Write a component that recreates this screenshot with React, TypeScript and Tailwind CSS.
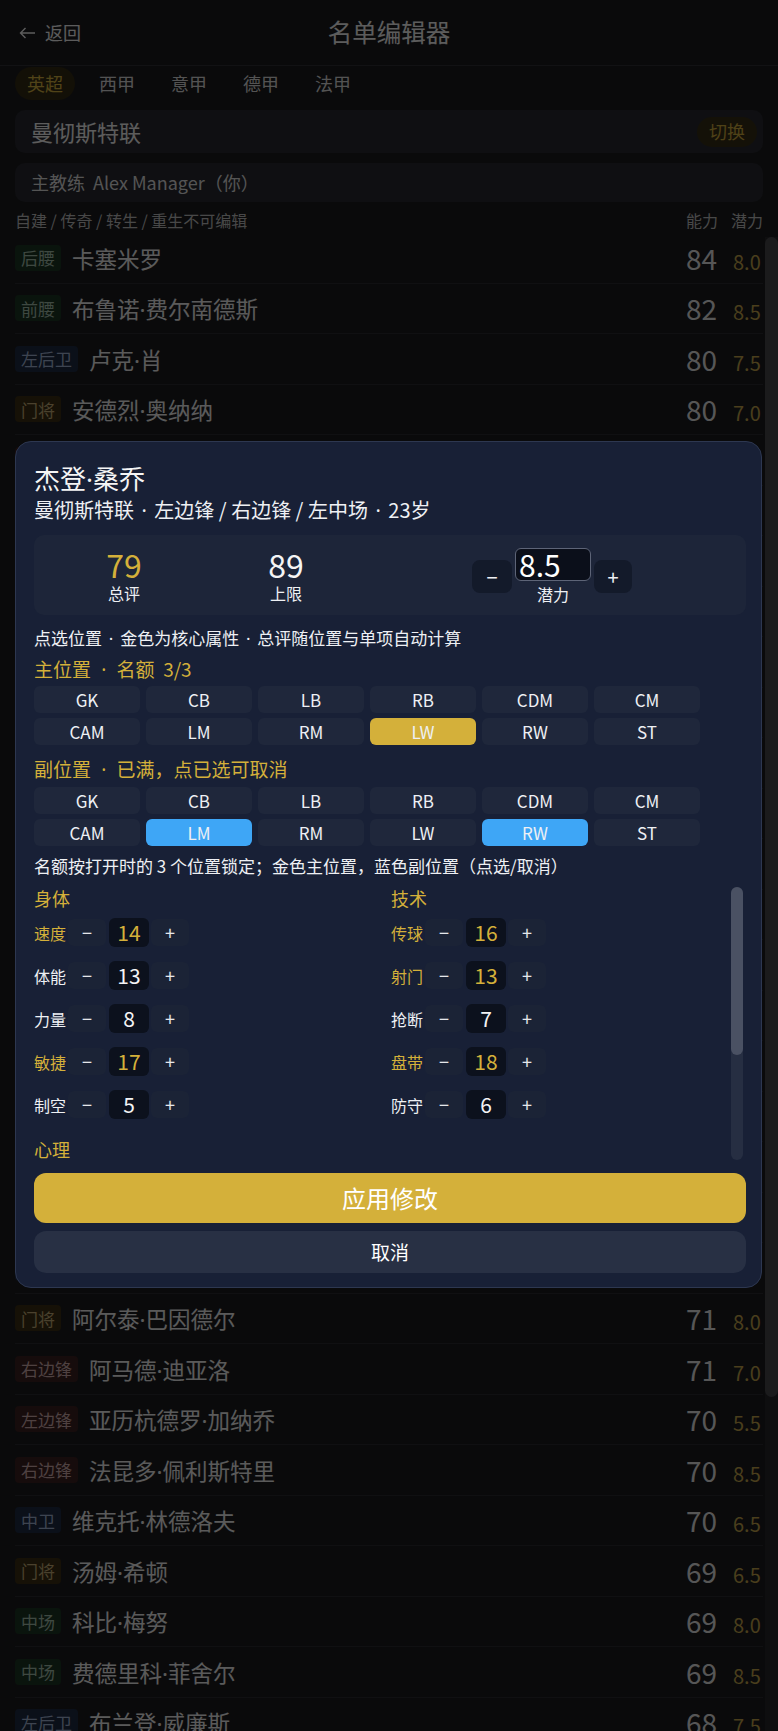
import React from 'react';

type Player = { pos: string; name: string; ovr: number; pot: string };

const players: Player[] = [
  { pos: '后腰', name: '卡塞米罗', ovr: 84, pot: '8.0' },
  { pos: '前腰', name: '布鲁诺·费尔南德斯', ovr: 82, pot: '8.5' },
  { pos: '左后卫', name: '卢克·肖', ovr: 80, pot: '7.5' },
  { pos: '门将', name: '安德烈·奥纳纳', ovr: 80, pot: '7.0' },
  { pos: '左边锋', name: '马库斯·拉什福德', ovr: 79, pot: '7.5' },
  { pos: '中卫', name: '利桑德罗·马丁内斯', ovr: 79, pot: '7.5' },
  { pos: '左边锋', name: '杰登·桑乔', ovr: 79, pot: '8.5' },
  { pos: '右后卫', name: '迪奥戈·达洛特', ovr: 78, pot: '8.0' },
  { pos: '中锋', name: '拉斯穆斯·霍伊伦', ovr: 77, pot: '8.5' },
  { pos: '中卫', name: '马塔伊斯·德里赫特', ovr: 77, pot: '8.0' },
  { pos: '中场', name: '梅森·芒特', ovr: 76, pot: '7.5' },
  { pos: '右后卫', name: '努塞尔·马兹拉维', ovr: 76, pot: '7.0' },
  { pos: '后腰', name: '曼努埃尔·乌加特', ovr: 76, pot: '7.5' },
  { pos: '中锋', name: '约书亚·齐尔克泽', ovr: 75, pot: '8.0' },
  { pos: '中场', name: '克里斯蒂安·埃里克森', ovr: 75, pot: '6.0' },
  { pos: '中卫', name: '哈里·马奎尔', ovr: 75, pot: '6.5' },
  { pos: '中卫', name: '乔尼·埃文斯', ovr: 73, pot: '5.5' },
  { pos: '左后卫', name: '泰瑞尔·马拉西亚', ovr: 73, pot: '7.0' },
  { pos: '右边锋', name: '安东尼', ovr: 72, pot: '6.5' },
  { pos: '中场', name: '斯科特·麦克托米奈', ovr: 72, pot: '7.0' },
  { pos: '右后卫', name: '阿隆·万-比萨卡', ovr: 72, pot: '7.0' },
  { pos: '门将', name: '阿尔泰·巴因德尔', ovr: 71, pot: '8.0' },
  { pos: '右边锋', name: '阿马德·迪亚洛', ovr: 71, pot: '7.0' },
  { pos: '左边锋', name: '亚历杭德罗·加纳乔', ovr: 70, pot: '5.5' },
  { pos: '右边锋', name: '法昆多·佩利斯特里', ovr: 70, pot: '8.5' },
  { pos: '中卫', name: '维克托·林德洛夫', ovr: 70, pot: '6.5' },
  { pos: '门将', name: '汤姆·希顿', ovr: 69, pot: '6.5' },
  { pos: '中场', name: '科比·梅努', ovr: 69, pot: '8.0' },
  { pos: '中场', name: '费德里科·菲舍尔', ovr: 69, pot: '8.5' },
  { pos: '左后卫', name: '布兰登·威廉斯', ovr: 68, pot: '7.5' },
];

const badgeTone: Record<string, string> = {
  后腰: 'bg-[#1b3322] text-[#9cb5a2]',
  前腰: 'bg-[#1b3322] text-[#9cb5a2]',
  中场: 'bg-[#1b3322] text-[#9cb5a2]',
  左后卫: 'bg-[#1c2840] text-[#9aabc8]',
  右后卫: 'bg-[#1c2840] text-[#9aabc8]',
  中卫: 'bg-[#1c2840] text-[#9aabc8]',
  门将: 'bg-[#382c12] text-[#b9a270]',
  左边锋: 'bg-[#381e1e] text-[#c2a2a2]',
  右边锋: 'bg-[#381e1e] text-[#c2a2a2]',
  中锋: 'bg-[#381e1e] text-[#c2a2a2]',
};

const leagues = ['英超', '西甲', '意甲', '德甲', '法甲'];
const positions = ['GK', 'CB', 'LB', 'RB', 'CDM', 'CM', 'CAM', 'LM', 'RM', 'LW', 'RW', 'ST'];

type Attr = { label: string; value: number; core: boolean };

const physical: Attr[] = [
  { label: '速度', value: 14, core: true },
  { label: '体能', value: 13, core: false },
  { label: '力量', value: 8, core: false },
  { label: '敏捷', value: 17, core: true },
  { label: '制空', value: 5, core: false },
];

const technical: Attr[] = [
  { label: '传球', value: 16, core: true },
  { label: '射门', value: 13, core: true },
  { label: '抢断', value: 7, core: false },
  { label: '盘带', value: 18, core: true },
  { label: '防守', value: 6, core: false },
];

// the CJK font draws "·" full width; use the narrow Latin one, with optional side room
const Dotted = ({ text, pad = '' }: { text: string; pad?: string }) => (
  <>
    {text.split('·').map((part, i) => (
      <React.Fragment key={i}>
        {i > 0 && <span className={"font-['Noto_Sans',sans-serif] leading-none " + pad}>·</span>}
        {part}
      </React.Fragment>
    ))}
  </>
);

const PosGrid = ({ selected, tone }: { selected: string[]; tone: 'gold' | 'blue' }) => (
  <div className="grid grid-cols-[repeat(6,106px)] gap-x-[6px] gap-y-[5px]">
    {positions.map((p) => {
      const on = selected.includes(p);
      return (
        <div
          key={p}
          className={
            'flex h-[27px] items-center justify-center rounded-[6px] text-[17px] text-[#eef0f4] ' +
            (on ? (tone === 'gold' ? 'bg-[#d4b03a]' : 'bg-[#3ea6f6]') : 'bg-[#1f273b]')
          }
        >
          {p}
        </div>
      );
    })}
  </div>
);

const AttrRow = ({ attr }: { attr: Attr }) => (
  <div className="flex h-[29px] items-center">
    <span className={'w-[32px] text-[16px] ' + (attr.core ? 'text-[#d4b03a]' : 'text-[#eef0f4]')}>{attr.label}</span>
    <span className="ml-[2px] flex h-[27px] w-[38px] items-center justify-center rounded-[6px] bg-[#1b2336] text-[18px] text-[#e5e7eb]">−</span>
    <span
      className={
        'ml-[3px] flex h-[29px] w-[40px] items-center justify-center rounded-[6px] bg-[#0c111d] text-[21px] ' +
        (attr.core ? 'text-[#d4b03a]' : 'text-[#f4f4f5]')
      }
    >
      {attr.value}
    </span>
    <span className="ml-[2px] flex h-[27px] w-[38px] items-center justify-center rounded-[6px] bg-[#1b2336] text-[18px] text-[#e5e7eb]">+</span>
  </div>
);

const AttrSection = ({ title, items }: { title: string; items: Attr[] }) => (
  <div>
    <div className="h-[20px] text-[18px] leading-[20px] text-[#d4b03a]">{title}</div>
    {items.length > 0 && (
      <div className="mt-[10px] flex flex-col gap-[14px]">
        {items.map((a) => (
          <AttrRow key={a.label} attr={a} />
        ))}
      </div>
    )}
  </div>
);

export default function App() {
  return (
    <div className="relative h-[1731px] overflow-hidden bg-[#1a1a1d] font-['Noto_Sans_CJK_SC',sans-serif] text-[#e6e6e6]">
      {/* header */}
      <header className="grid h-[66px] grid-cols-[1fr_auto_1fr] items-center border-b border-[#2e2e33]">
        <div className="flex items-center gap-[9px] pl-[19px] text-[18px]">
          <svg width="17" height="12" viewBox="0 0 17 12" fill="none" stroke="currentColor" strokeWidth="1.4">
            <path d="M16 6H1.5M6.5 1L1.5 6l5 5" />
          </svg>
          <span>返回</span>
        </div>
        <div className="text-[24.5px]">名单编辑器</div>
        <div />
      </header>

      {/* league tabs */}
      <div className="mt-[1px] flex gap-3 px-[15px]">
        {leagues.map((l, i) => (
          <div
            key={l}
            className={
              'flex h-[33px] items-center rounded-full px-3 text-[18px] ' +
              (i === 0 ? 'bg-[#302812] text-[#c9a83c]' : 'text-[#d0d0d0]')
            }
          >
            {l}
          </div>
        ))}
      </div>

      <div className="mx-[15px] mt-[10px] flex h-[43px] items-center justify-between rounded-[10px] bg-[#26272d] pl-[16px] pr-[6px]">
        <span className="text-[22px]">曼彻斯特联</span>
        <span className="flex h-[30px] items-center rounded-full bg-[#342c16] px-3 text-[18px] text-[#c4a23a]">切换</span>
      </div>

      <div className="mx-[15px] mt-[10px] flex h-[39px] items-center rounded-[10px] bg-[#26272d] pl-[16px] text-[18px] text-[#d2d2d2]">
        主教练&nbsp;&nbsp;Alex Manager（你）
      </div>

      <div className="mt-[9px] flex justify-between px-[15px] text-[16px] leading-[18px] text-[#b5b5b5]">
        <span>自建 / 传奇 / 转生 / 重生不可编辑</span>
        <span className="flex gap-[13px]">
          <span>能力</span>
          <span>潜力</span>
        </span>
      </div>

      {/* roster list */}
      <div className="mt-[4px] flex pl-[15px]">
        <div className="flex-1 pr-[2px]">
          {players.map((p) => (
            <div key={p.name} className="flex h-[50.5px] items-center gap-[11px] border-b border-[#28282d]">
              <span className={'flex h-[26px] items-center rounded-[4px] px-[6px] text-[17px] ' + badgeTone[p.pos]}>{p.pos}</span>
              <span className="text-[22.5px] leading-[30px] text-[#e2e2e2]">
                <Dotted text={p.name} />
              </span>
              <span className="ml-auto flex items-baseline">
                <span className="text-[28px] leading-none text-[#d8d8d8]">{p.ovr}</span>
                <span className="ml-[16px] w-[30px] text-[20px] leading-none text-[#b89c48]">{p.pot}</span>
              </span>
            </div>
          ))}
        </div>
        <div className="mt-[4px] w-[13px] bg-[#232326]">
          <div className="h-[1160px] rounded-full bg-[#444448]" />
        </div>
      </div>

      {/* dim overlay */}
      <div className="absolute inset-0 bg-black/60" />

      {/* editor modal */}
      <div className="absolute left-[15px] top-[441px] w-[747px] rounded-[16px] border border-[#2d3750] bg-[#182036] pb-[14px] pl-[18px] pr-[15px] pt-[20px] text-[#eef0f4]">
        <div className="h-[32px] text-[26px] leading-[32px] text-[#f5f5f5]">
          <Dotted text="杰登·桑乔" />
        </div>
        <div className="mt-[4px] h-[24px] text-[20px] leading-[24px]">
          <Dotted text="曼彻斯特联 · 左边锋 / 右边锋 / 左中场 · 23岁" pad="px-[3px]" />
        </div>

        <div className="mt-[13px] grid h-[80px] grid-cols-[180px_144px_1fr] items-center rounded-[10px] bg-[#1d2539]">
          <div className="flex flex-col items-center">
            <span className="text-[32px] leading-[34px] text-[#d4b03a]">79</span>
            <span className="mt-[2px] text-[16px] leading-[20px]">总评</span>
          </div>
          <div className="flex flex-col items-center">
            <span className="text-[32px] leading-[34px] text-[#f5f5f5]">89</span>
            <span className="mt-[2px] text-[16px] leading-[20px]">上限</span>
          </div>
          <div className="flex items-center justify-center gap-[3px]">
            <span className="mt-[3px] flex h-[33px] w-[40px] items-center justify-center rounded-[8px] bg-[#131a2a] text-[20px]">−</span>
            <div className="flex flex-col items-center">
              <div className="flex h-[33px] w-[76px] items-center rounded-[6px] border-[1.5px] border-[#5d6477] bg-[#0b0f1a] pl-[3px] text-[30px] leading-none text-white">
                8.5
              </div>
              <span className="mt-[4px] text-[16px] leading-[18px]">潜力</span>
            </div>
            <span className="mt-[3px] flex h-[33px] w-[38px] items-center justify-center rounded-[8px] bg-[#131a2a] text-[20px]">+</span>
          </div>
        </div>

        <div className="mt-[12px] h-[22px] text-[17px] leading-[22px]">
          <Dotted text="点选位置 · 金色为核心属性 · 总评随位置与单项自动计算" pad="px-[3px]" />
        </div>
        <div className="mt-[9px] h-[22px] text-[19px] leading-[22px] text-[#d4b03a]">
          <Dotted text={'主位置 · 名额\u00a0\u00a03/3'} pad="px-[6px]" />
        </div>
        <div className="mt-[6px]">
          <PosGrid selected={['LW']} tone="gold" />
        </div>
        <div className="mt-[13px] h-[22px] text-[19px] leading-[22px] text-[#d4b03a]">
          <Dotted text="副位置 · 已满，点已选可取消" pad="px-[6px]" />
        </div>
        <div className="mt-[7px]">
          <PosGrid selected={['LM', 'RW']} tone="blue" />
        </div>
        <div className="mt-[9px] h-[22px] text-[17px] leading-[22px]">名额按打开时的 3 个位置锁定；金色主位置，蓝色副位置（点选/取消）</div>

        <div className="mt-[9px] flex h-[274px] overflow-hidden">
          <div className="grid flex-1 grid-cols-[357px_1fr] content-start gap-y-[20px] pt-[2px]">
            <AttrSection title="身体" items={physical} />
            <AttrSection title="技术" items={technical} />
            <AttrSection title="心理" items={[]} />
          </div>
          <div className="mr-[3px] mt-[1px] w-[12px] rounded-full bg-[#262e42]">
            <div className="h-[168px] rounded-full bg-[#4a5163]" />
          </div>
        </div>

        <button className="mt-[13px] flex h-[50px] w-full items-center justify-center rounded-[12px] bg-[#d4b03a] text-[24px] text-white">
          应用修改
        </button>
        <button className="mt-[8px] flex h-[42px] w-full items-center justify-center rounded-[12px] bg-[#283044] text-[19px] text-white">
          取消
        </button>
      </div>
    </div>
  );
}
